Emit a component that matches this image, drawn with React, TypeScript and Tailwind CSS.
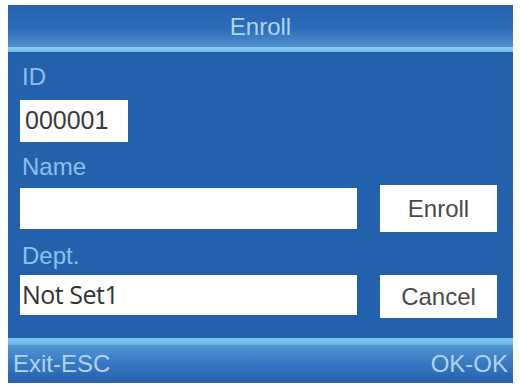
export default function App() {
  return (
    <div className="w-[520px] h-[387px] bg-white pt-[5px] pb-[4px] pl-[8px] pr-[7px] font-['Liberation_Sans',Arial,sans-serif]">
      <div className="flex flex-col h-full bg-[#2361ad]">
        {/* header */}
        <div className="h-[47px] shrink-0 flex flex-col bg-gradient-to-b from-[#2462b0] via-[#2d6cb8] to-[#5a9ad6]">
          <div className="flex-1 flex items-center justify-center text-[24px] leading-[24px] text-[#b0d4f4] pt-[2px]">
            Enroll
          </div>
          <div className="h-[5px] bg-gradient-to-b from-[#8fd2f2] to-[#6fb6e6]" />
        </div>

        <div className="flex-1 flex flex-col px-[12px] pt-[13px]">
          <div className="text-[24px] leading-[24px] text-[#8cc0ee] pl-[2px]">ID</div>
          <div className="mt-[11px] w-[108px] h-[42px] bg-white flex items-center px-[5px] text-[25px] text-[#3a3a3a]">
            000001
          </div>

          <div className="mt-[13px] text-[24px] leading-[24px] text-[#8cc0ee] pl-[2px]">Name</div>
          <div className="mt-[6px] flex items-center">
            <div className="w-[337px] h-[41px] bg-white" />
            <div className="ml-[23px] w-[117px] h-[47px] bg-white flex items-center justify-center text-[24px] text-[#4a4a4a]">
              Enroll
            </div>
          </div>

          <div className="mt-[12px] text-[24px] leading-[24px] text-[#8cc0ee] pl-[2px]">Dept.</div>
          <div className="mt-[7px] flex items-start">
            <div className="w-[337px] h-[40px] bg-white flex items-center px-[2px] text-[25px] text-[#333] font-['Open_Sans',sans-serif] tracking-[-0.5px]">
              Not Set1
            </div>
            <div className="ml-[23px] w-[117px] h-[43px] bg-white flex items-center justify-center text-[24px] text-[#4a4a4a]">
              Cancel
            </div>
          </div>
        </div>

        {/* footer */}
        <div className="h-[45px] shrink-0 flex flex-col bg-gradient-to-b from-[#5fa6dc] via-[#3b7cc4] to-[#2560ad]">
          <div className="h-[7px] bg-gradient-to-b from-[#7cc6ec] to-[#6ab4e4]" />
          <div className="flex-1 flex items-center justify-between px-[5px] text-[24px] leading-[24px] text-[#b0d4f2]">
            <span>Exit-ESC</span>
            <span>OK-OK</span>
          </div>
        </div>
      </div>
    </div>
  )
}
